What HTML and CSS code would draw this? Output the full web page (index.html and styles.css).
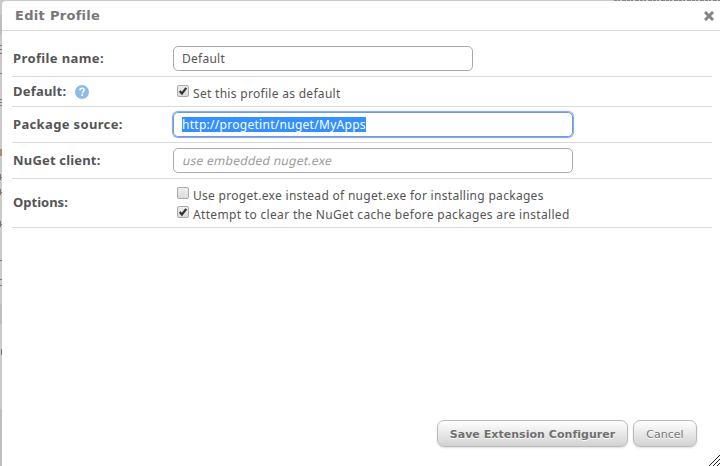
FILE: index.html
```html
<!DOCTYPE html>
<html lang="en">
<head>
<meta charset="utf-8">
<title>Edit Profile</title>
<link rel="stylesheet" href="styles.css">
</head>
<body>
<svg class="backdrop" width="720" height="466" aria-hidden="true">
  <path fill="#bdbdbd" d="M0 15h2v20H0zM0 304h2v20H0zM0 409h2v57H0z"/>
  <path fill="#777" d="M0 45h2v1H0zM0 49h2v1H0zM0 53h2v1H0zM0 73h2v1H0zM0 99h2v1H0zM0 102h2v1H0zM0 105h2v1H0zM0 174h1v6H0zM0 177h2v1H0zM0 189h1v6H0zM0 192h2v1H0zM0 221h1v6H0zM0 224h2v1H0zM0 260h2v1H0zM0 279h2v1H0zM0 285h2v1H0zM1 349h1v6H1z"/>
  <path fill="#b08a6c" d="M0 149h2v7H0z"/>
  <path stroke="#858585" stroke-dasharray="3 1 2 2 4 1" d="M614 .5H720"/>
</svg>
<div class="dialog">
  <header class="titlebar">
    <h1>Edit Profile</h1>
    <svg class="close" width="10" height="10" viewBox="0 0 10 10"><path d="M2 2l6 6M8 2l-6 6" stroke="#858585" stroke-width="3" stroke-linecap="square"/></svg>
  </header>
  <form class="fields">
    <div class="row name"><b class="label l1">Profile name:</b><div class="box short"><span class="v1">Default</span></div></div>
    <div class="row default"><b class="label l2">Default:</b><svg class="help" width="14" height="14" viewBox="0 0 14 14"><circle cx="7" cy="7" r="7" fill="#8dbbe7"/><path d="M4.900 5.200C5 2.500 9.200 2.600 9.100 5.100C9 6.600 7.200 6.600 7.200 8.300" fill="none" stroke="#fff" stroke-width="1.600"/><path fill="#fff" d="M6.300 9.300h1.700v1.700H6.300z"/></svg>
      <div class="check"><i class="tick on"><svg viewBox="0 0 12 12"><path d="M2.700 6l2.200 2.500L9.300 2.800"/></svg></i><span class="c1">Set this profile as default</span></div></div>
    <div class="row source"><b class="label l3">Package source:</b><div class="box focus"><span class="selected">http://progetint/nuget/MyApps</span></div></div>
    <div class="row client"><b class="label l4">NuGet client:</b><div class="box"><span class="hint">use embedded nuget.exe</span></div></div>
    <div class="row options"><b class="label l5">Options:</b>
      <div class="checks">
        <div class="check"><i class="tick"></i><span class="c2">Use proget.exe instead of nuget.exe for installing packages</span></div>
        <div class="check"><i class="tick on"><svg viewBox="0 0 12 12"><path d="M2.700 6l2.200 2.500L9.300 2.800"/></svg></i><span class="c3">Attempt to clear the NuGet cache before packages are installed</span></div>
      </div></div>
  </form>
  <footer class="actions">
    <div class="button save"><span>Save Extension Configurer</span></div>
    <div class="button cancel"><span>Cancel</span></div>
  </footer>
  <svg class="grip" width="11" height="11" viewBox="0 0 11 11"><path d="M0 11L11 0M4 11L11 4M8 11L11 8" stroke="#222" stroke-width="1"/></svg>
</div>
</body>
</html>
```
FILE: styles.css
```css
* { box-sizing: border-box; }
body { margin: 0; width: 720px; height: 466px; overflow: hidden; background: #cacaca; font: 12px/18px "Noto Sans", sans-serif; color: #555; }
.backdrop { position: absolute; left: 0; top: 0; }
.dialog { position: relative; height: 465px; margin: 1px 0 0 2px; background: #fff; border-top-left-radius: 4px; }
.titlebar { display: flex; justify-content: space-between; height: 30px; border-bottom: 1px solid #d9d9d9; padding: 0 6px 0 13px; }
h1 { margin: 0; font: bold 13px/30px "DejaVu Sans", sans-serif; letter-spacing: .3px; color: #777; white-space: nowrap; }
.close { margin-top: 10px; }
.fields { margin: 0 8px 0 10px; }
.row { display: flex; align-items: center; border-bottom: 1px solid #dadada; }
.name { height: 46px; align-items: flex-start; padding-top: 15px; }
.name .label { padding-top: 3px; padding-bottom: 0; }
.default { height: 30px; }
.source, .client { height: 36px; }
.options { height: 49px; }
.label { width: 160px; padding: 0 0 2px 1px; font-size: 13px; white-space: nowrap; color: #555; }
.default .label { width: 63px; }
.l1 { letter-spacing: .38px; }
.l2 { letter-spacing: .2px; }
.l3 { letter-spacing: .35px; }
.l4 { letter-spacing: .18px; }
.help { margin-right: 84px; }
.box { width: 400px; height: 25px; padding: 0 8px; border: 1px solid #aaa; border-radius: 5px; margin-left: 1px; white-space: nowrap; line-height: 23px; }
.short { width: 300px; }
.v1 { letter-spacing: .25px; }
.focus { border-color: #6f99e3; box-shadow: 0 0 1px 1px #7fa5e8; }
.selected { display: inline-block; height: 15px; line-height: 15px; background: #3390ff; color: #fff; letter-spacing: .28px; }
.hint { display: inline-block; margin-left: 1px; color: #999; transform: skewX(-12deg); letter-spacing: .28px; }
.check { display: flex; height: 19px; white-space: nowrap; }
.default .check { margin: 6px 0 0 4px; }
.checks { margin: 6px 0 0 5px; }
.c1 { letter-spacing: .3px; }
.c2 { letter-spacing: .3px; }
.c3 { letter-spacing: .33px; }
.tick { width: 12px; height: 12px; margin-right: 4px; border: 1px solid #aaa; border-radius: 2px; background: linear-gradient(#eee, #dcdcdc); }
.tick svg { display: block; width: 12px; height: 12px; margin: -1px; fill: none; stroke: #333; stroke-width: 2.2; }
.actions { position: absolute; right: 23px; bottom: 19px; display: flex; gap: 5px; }
.button { height: 27px; border: 1px solid #bbb; border-radius: 7px; background: linear-gradient(#fff, #d2d2d2); box-shadow: 0 1px 2px #ddd; color: #777; text-align: center; white-space: nowrap; font: 11px/27px "DejaVu Sans", sans-serif; text-shadow: 0 1px #fff; }
.save { width: 191px; font-weight: bold; color: #707070; letter-spacing: .04px; }
.cancel { width: 64px; }
.grip { position: absolute; right: 0; bottom: 0; }
```
